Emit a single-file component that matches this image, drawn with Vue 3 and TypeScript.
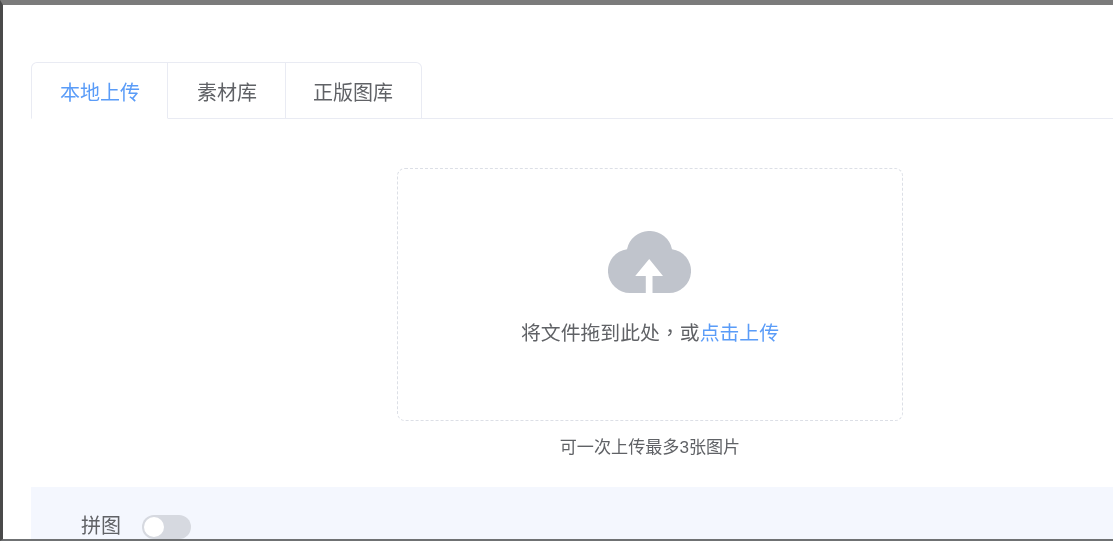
<script setup lang="ts">
const tabs: string[] = ['本地上传', '素材库', '正版图库']
</script>

<template>
  <div class="frame">
    <div class="page">
      <div class="tabs">
        <div v-for="(tab, i) in tabs" :key="tab" class="tab" :class="{ active: i === 0 }">{{ tab }}</div>
        <div class="tabs-rest"></div>
      </div>
      <div class="upload-wrap">
        <div class="drop">
          <svg class="cloud" viewBox="0 0 83 62" width="83" height="62">
            <path fill="#c0c4cc" d="M22 62A22 22 0 0 1 19 18.2A23 23 0 0 1 64 18.2A22 22 0 0 1 61 62Z" />
            <path fill="#fff" d="M41.2 28L55 45H44.5V62H37.8V45H27.2Z" />
          </svg>
          <div class="drop-text">将文件拖到此处<span class="comma">，</span>或<em>点击上传</em></div>
        </div>
        <div class="tip">可一次上传最多3张图片</div>
      </div>
      <div class="panel">
        <span class="label">拼图</span>
        <span class="switch"><i></i></span>
      </div>
    </div>
  </div>
</template>

<style>
html, body { margin: 0; background: #fff; }
</style>

<style scoped>
.frame {
  box-sizing: border-box;
  width: 1113px;
  height: 541px;
  overflow: hidden;
  background: #fff;
  border-top: 5px solid #7b7b7b;
  border-left: 3px solid #4a4a4a;
  border-bottom: 2px solid #6f7173;
  font-family: "Liberation Sans", "Noto Sans CJK SC", sans-serif;
}
.page {
  display: flex;
  flex-direction: column;
  height: 100%;
  padding: 57px 0 0 28px;
  box-sizing: border-box;
  filter: blur(0.4px);
}
.tabs {
  display: flex;
  height: 57px;
  box-sizing: border-box;
}
.tab {
  box-sizing: border-box;
  height: 57px;
  line-height: 60px;
  font-size: 20px;
  color: #606266;
  border: 1px solid #e9ebf3;
  border-left: 0;
}
.tab:nth-child(1) {
  padding: 0 27px 0 28px;
  border-left: 1px solid #e9ebf3;
  border-top-left-radius: 6px;
}
.tab:nth-child(2) {
  padding: 0 28px 0 29px;
}
.tab:nth-child(3) {
  padding: 0 28px 0 27px;
  border-top-right-radius: 6px;
}
.tab.active {
  color: #5a9cf8;
  border-bottom-color: transparent;
}
.tabs-rest {
  flex: 1;
  border-bottom: 1px solid #e9ebf3;
}
.upload-wrap {
  display: flex;
  flex-direction: column;
  align-items: center;
  width: 506px;
  margin: 49px 0 0 366px;
}
.drop {
  box-sizing: border-box;
  width: 506px;
  height: 253px;
  border: 1px dashed #dcdfe6;
  border-radius: 8px;
  display: flex;
  flex-direction: column;
  align-items: center;
  padding-top: 62px;
}
.cloud {
  display: block;
  margin-right: 1px;
}
.drop-text {
  margin-top: 24px;
  font-size: 19.85px;
  line-height: 30px;
  color: #606266;
  white-space: nowrap;
}
.comma {
  font-family: "Noto Sans CJK TC", sans-serif;
}
.drop-text em {
  font-style: normal;
  color: #5a9cf8;
}
.tip {
  margin-top: 13px;
  font-size: 17.1px;
  line-height: 27px;
  color: #606266;
}
.panel {
  flex: 1;
  margin-top: 26px;
  background: #f4f7fe;
  display: flex;
  align-items: flex-start;
  padding: 26px 0 0 50px;
  overflow: hidden;
}
.label {
  font-size: 20px;
  line-height: 26px;
  color: #606266;
}
.switch {
  display: block;
  position: relative;
  width: 49px;
  height: 24px;
  margin: 2px 0 0 21px;
  border-radius: 12px;
  background: #d6d9e0;
}
.switch i {
  position: absolute;
  left: 2px;
  top: 2px;
  width: 20px;
  height: 20px;
  border-radius: 50%;
  background: #fff;
}
</style>
